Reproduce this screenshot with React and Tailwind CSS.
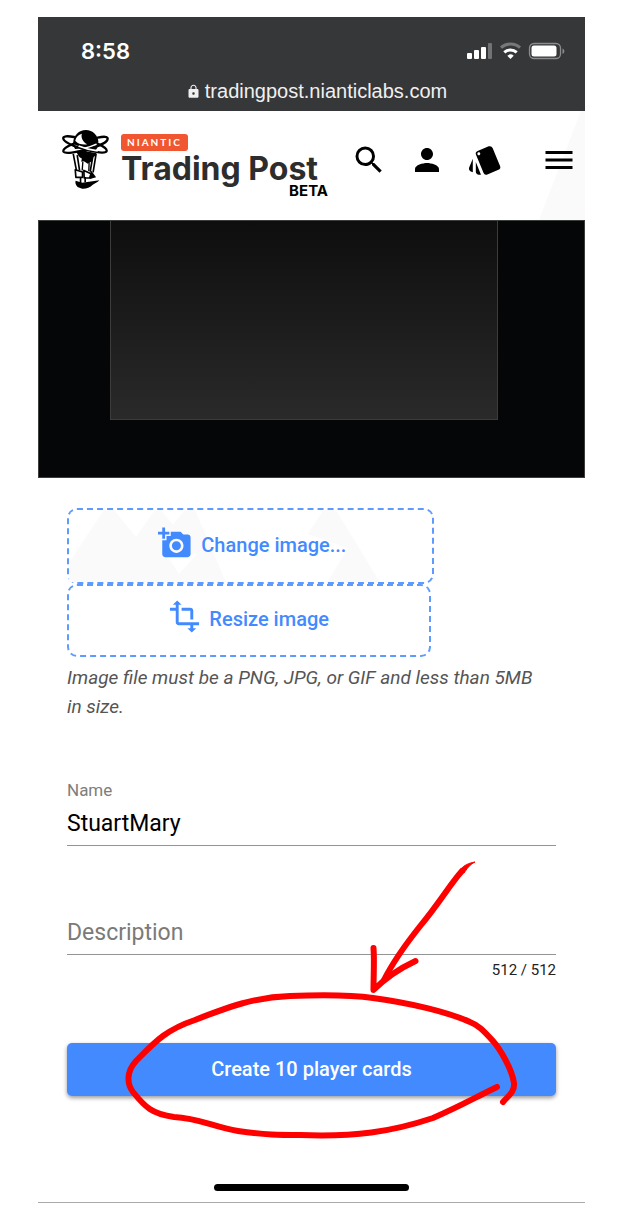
import { useState } from 'react'
import { MdAddAPhoto, MdLock, MdMenu, MdPerson, MdSearch, MdStyle, MdTransform } from 'react-icons/md'

const MAX_DESCRIPTION = 512

function StatusIcons() {
  return (
    <svg viewBox="0 0 98 18" className="h-[18px] w-[98px]" aria-hidden="true">
      <g fill="#fff">
        <rect x="0" y="11" width="5" height="6" rx="1" />
        <rect x="7" y="8" width="5" height="9" rx="1" />
        <rect x="14" y="5" width="5" height="12" rx="1" />
        <rect x="21" y="1" width="4" height="16" rx="1" opacity="0.3" />
        <path d="M43.500 17l-3.200-3.200a4.800 4.800 0 0 1 6.400 0z" />
      </g>
      <path d="M34 5.700a14 14 0 0 1 19 0" fill="none" stroke="#77787a" strokeWidth="3" />
      <path d="M37.300 10.300a9.200 9.200 0 0 1 12.400 0" fill="none" stroke="#fff" strokeWidth="3" />
      <rect x="62.500" y="1.500" width="31" height="15" rx="4.500" fill="none" stroke="#8b8c8e" strokeWidth="1.300" />
      <rect x="64.500" y="3.500" width="25" height="11" rx="2.500" fill="#fff" />
      <path d="M95.500 6.500c2.500 1 2.500 4.500 0 5.500z" fill="#8b8c8e" />
    </svg>
  )
}

function StatusBar() {
  return (
    <div className="bg-[#363739] pt-5 pb-[7px] text-white">
      <div className="flex h-7 items-center justify-between pr-5 pl-[43px]">
        <span className="font-[Inter,sans-serif] text-[22px] leading-7 font-semibold">8:58</span>
        <StatusIcons />
      </div>
      <div className="mt-[13px] flex h-[26px] items-center justify-center gap-1 pl-[10px] font-['Liberation_Sans',sans-serif] text-[20px] leading-[26px] text-[#f0f0f0]">
        <MdLock className="size-[15px]" />
        <span>tradingpost.nianticlabs.com</span>
      </div>
    </div>
  )
}

function BalloonMark() {
  return (
    <svg viewBox="36 42 142 182" className="h-[61px] w-[47px] shrink-0" aria-hidden="true">
      <circle cx="108" cy="82" r="38" fill="#000" />
      <path d="M76 76c2-10 10-18 20-21-2 7-1 13 3 20 3 6 7 9 13 12-14 2-28-1-36-11z" fill="#fff" />
      <path d="M80 110h62c-4 10-8 14-12 16l-4 12-12 8-12-8-8 2 2-10c-8-4-13-11-16-20z" fill="#000" />
      <g fill="none" stroke="#fff" strokeWidth="6">
        <path d="M46 74c10 12 36 22 68 32 20 5 40 6 52 4" />
        <path d="M46 104c28 4 70-4 98-18 12-6 20-10 24-14" />
      </g>
      <g fill="none" stroke="#000" strokeWidth="7" strokeLinecap="round">
        <path d="M72 65C52 61 38 62 40 70c2 9 28 21 60 31 36 11 70 15 71 6 1-6-10-14-28-22" />
        <path d="M144 67c18-4 30-4 30 3 0 9-24 22-56 31-38 11-76 16-78 7-1-6 12-15 32-23" />
      </g>
      <path d="M86 92c14 6 34 12 58 15" fill="none" stroke="#fff" strokeWidth="5" />
      <g fill="none" stroke="#000" strokeWidth="5">
        <path d="M70 116l10 52M82 120l7 46M139 116l-9 56M129 124l-8 46" />
        <path d="M99 140l-2 26M118 142l-1 26" strokeWidth="4" />
      </g>
      <g fill="#fff" stroke="#000" strokeWidth="5" strokeLinejoin="round">
        <path d="M76 164l22 7v16H78z" />
        <path d="M102 166l22 10-2 13h-19z" />
      </g>
      <path d="M124 166l15 21-16 4-6-2z" fill="#000" />
      <path d="M92 186v18M106 186v16" fill="none" stroke="#000" strokeWidth="5" />
      <path d="M77 197l20 6 52-7c-6 7-14 9-20 13-8 9-22 13-32 12l-14-5c-5-6-8-12-6-19z" fill="#000" />
    </svg>
  )
}

function Header() {
  return (
    <header className="relative flex h-[109px] items-start bg-white pl-6">
      <svg viewBox="0 0 46 109" className="absolute top-0 right-0 h-full w-[46px]" aria-hidden="true">
        <path d="M0 109L42 0h4v109z" fill="#fafafa" />
      </svg>
      <a href="#home" className="relative flex gap-3 pt-[18px]">
        <BalloonMark />
        <span className="flex flex-col items-start pt-[5px] font-[Inter,sans-serif]">
          <span className="rounded-[3px] bg-[#f0562f] px-[6px] font-[Lato,sans-serif] text-[10px] leading-[17px] font-bold tracking-[2px] text-white">
            NIANTIC
          </span>
          <span className="mt-px text-[32px] leading-[34px] font-bold whitespace-nowrap text-[#2d2d2d]">Trading Post</span>
          <span className="-mr-[10px] self-end text-[15px] leading-[10px] font-bold text-black">BETA</span>
        </span>
      </a>
      <nav className="relative ml-auto flex items-center gap-[22px] pt-[31px] pr-2 text-black">
        <button type="button" aria-label="Search">
          <MdSearch className="size-9" />
        </button>
        <button type="button" aria-label="Account">
          <MdPerson className="size-9" />
        </button>
        <button type="button" aria-label="Cards">
          <MdStyle className="size-9" />
        </button>
        <button type="button" aria-label="Menu" className="ml-4">
          <MdMenu className="size-9" />
        </button>
      </nav>
    </header>
  )
}

function ImagePreview() {
  return (
    <div className="h-[258px] border border-[#3c3d3d] bg-[#050607] pr-[86px] pb-[57px] pl-[71px]">
      <div className="h-full border border-t-0 border-[#3c3c3c] bg-linear-to-b from-[#0e0e0e] to-[#2a2a2a]" />
    </div>
  )
}

function ImageButtons() {
  return (
    <div className="flex flex-col items-start text-[20px] font-medium text-[#448aff]">
      <button
        type="button"
        className="relative flex h-[76px] w-[75%] items-center justify-center gap-[9px] rounded-[10px] border-2 border-dashed border-[#5f9bff] pb-[2px] pl-1"
      >
        <svg viewBox="0 0 363 72" preserveAspectRatio="none" className="absolute inset-0 size-full" aria-hidden="true">
          <path d="M0 53L35 0h10l22 27L86 0h6l12 15L116 0h10l31 72H0z" fill="#fafafa" />
          <path d="M97 44l13 20 18-20z" fill="#fff" />
          <path d="M239 24L255 0h12l44 72h-52l20-34z" fill="#fafafa" />
          <path d="M259 72l22-32 12 32z" fill="#fafafa" />
        </svg>
        <MdAddAPhoto className="relative mb-1 size-[34px]" />
        <span className="relative">Change image...</span>
      </button>
      <button
        type="button"
        className="flex h-[73px] w-[74.5%] items-center justify-center gap-[7px] rounded-[10px] border-2 border-dashed border-[#5f9bff] pr-[2px] pb-1"
      >
        <MdTransform className="mb-1 size-[35px]" />
        <span>Resize image</span>
      </button>
    </div>
  )
}

// hand drawn marker strokes over the submit button
function Marker() {
  return (
    <svg viewBox="38 17 547 1186" className="pointer-events-none absolute top-0 left-0 w-full" aria-hidden="true">
      <g fill="none" stroke="#f00" strokeWidth="6" strokeLinecap="round" strokeLinejoin="round">
        <path d="M503 1102C508 1096 515 1092 514 1083C512 1069 500 1049 493 1041C483 1030 478 1025 470 1022C448 1012 410 1003 373 998C345 994 315 995 290 996C255 997 228 1007 195 1020C165 1030 154 1043 136 1061C126 1072 127 1084 133 1092C145 1107 152 1114 174 1117C199 1118 213 1127 238 1131C265 1135 280 1135 300 1135C355 1137 391 1132 433 1118C461 1106 474 1098 497 1087" />
        <path d="M384 980C394 960 405 945 421 925C440 902 451 883 462 871" />
        <path d="M373.500 948c1 13 0 27 0 42 12-12 25-21 42-29" />
      </g>
      <path d="M460 870c4-5 9-7 15-8-6 3-8 7-11 11z" fill="#f00" stroke="#f00" strokeWidth="1" />
    </svg>
  )
}

export default function App() {
  const [name, setName] = useState('StuartMary')
  const [description, setDescription] = useState('')

  return (
    <div className="bg-white pt-[17px] pr-[34px] pb-[27px] pl-[38px]">
      <div className="relative border-b border-[#aaa] font-[Roboto,sans-serif]">
        <StatusBar />
        <Header />
        <ImagePreview />
        <form className="pt-[30px] pr-[29px] pl-[29px]" onSubmit={(e) => e.preventDefault()}>
          <ImageButtons />
          <p className="mt-[6px] pr-2 text-[19px] leading-[29px] text-[#555] italic">
            Image file must be a PNG, JPG, or GIF and less than 5MB in size.
          </p>
          <label htmlFor="name" className="mt-[59px] block text-[17px] leading-5 text-[#7d7d7d]">
            Name
          </label>
          <input
            id="name"
            value={name}
            onChange={(e) => setName(e.target.value)}
            className="block h-[46px] w-full border-b border-[#949494] pt-[2px] text-[23px] text-black outline-none"
          />
          <input
            aria-label="Description"
            placeholder="Description"
            maxLength={MAX_DESCRIPTION}
            value={description}
            onChange={(e) => setDescription(e.target.value)}
            className="mt-[63px] block h-[46px] w-full border-b border-[#949494] pt-[2px] text-[23px] text-black outline-none placeholder:text-[#7a7a7a]"
          />
          <p className="mt-[5px] text-right text-[15px] leading-5 text-[#222]">
            {MAX_DESCRIPTION - description.length} / {MAX_DESCRIPTION}
          </p>
          <button
            type="submit"
            className="mt-[63px] h-[53px] w-full rounded-[5px] bg-[#448aff] pb-[2px] text-[20px] font-medium text-white shadow-[0_2px_4px_rgba(0,0,0,0.4)]"
          >
            Create 10 player cards
          </button>
        </form>
        <div className="mx-auto mt-[88px] mb-[11px] h-[7px] w-[195px] rounded-full bg-black" />
        <Marker />
      </div>
    </div>
  )
}
